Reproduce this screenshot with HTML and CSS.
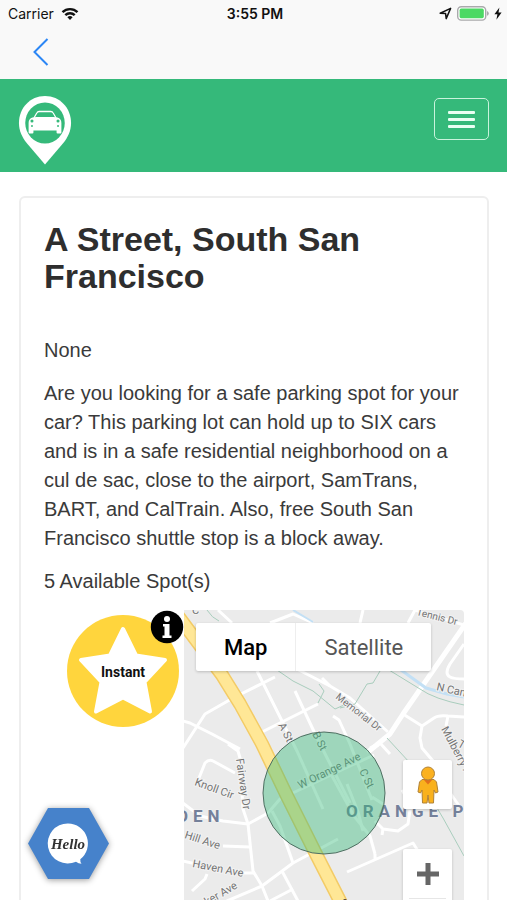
FILE: index.html
```html
<!DOCTYPE html>
<html lang="en">
<head>
    <meta charset="UTF-8">
    <meta name="viewport" content="width=device-width, initial-scale=1.0">
    <title>A Street, South San Francisco</title>
    <link rel="stylesheet" href="styles.css">
</head>
<body>
    <div class="app">
        <header class="top-bar">
            <div class="status-bar">
                <div class="status-left">
                    <span>Carrier</span>
                    <svg width="18" height="14" viewBox="0 0 18 14" fill="none" stroke="#111" stroke-width="2.4">
                        <path d="M1.5 5.2a10.6 10.6 0 0 1 15 0"/>
                        <path d="M4.3 8.2a6.6 6.6 0 0 1 9.4 0"/>
                        <path d="M9 13l-2.6-2.7a3.7 3.7 0 0 1 5.2 0z" fill="#111" stroke="none"/>
                    </svg>
                </div>
                <span class="time">3:55 PM</span>
                <div class="status-right">
                    <svg width="13" height="13" viewBox="0 0 13 13" fill="none" stroke="#111" stroke-width="1.5" stroke-linejoin="round">
                        <path d="M1.2 6.2L11.6 1.4 7.2 11.6 6.6 6.6z"/>
                    </svg>
                    <svg width="32" height="15" viewBox="0 0 32 15">
                        <rect x="0.7" y="0.7" width="28" height="13.4" rx="3.6" fill="#fff" stroke="#a9a9ab" stroke-width="1.4"/>
                        <rect x="2.6" y="2.6" width="24.2" height="9.6" rx="1.6" fill="#4cd964"/>
                        <path d="M30 5v4.8q1.8-.8 1.8-2.4T30 5z" fill="#a9a9ab"/>
                    </svg>
                    <svg width="8" height="13" viewBox="0 0 8 13" fill="#111">
                        <path d="M5.4.4L.4 7.2h3L2.4 12.8 7.6 5.6H4.5z"/>
                    </svg>
                </div>
            </div>
            <button class="back" aria-label="Back">
                <svg width="16" height="28" viewBox="0 0 16 28" fill="none" stroke="#2b86f5" stroke-width="2">
                    <path d="M14.5 1L1.5 14l13 13"/>
                </svg>
            </button>
        </header>

        <nav class="navbar">
            <a href="#" class="brand" aria-label="Home">
                <svg width="54" height="70" viewBox="0 0 56 70" preserveAspectRatio="none">
                    <path d="M28 1C12.5 1 1 13 1 28c0 8 3.5 14.500 8 20l19 21.500L47 48c4.500-5.500 8-12 8-20C55 13 43.500 1 28 1z" fill="#fff"/>
                    <circle cx="28" cy="28" r="20.5" fill="#35b97a"/>
                    <path d="M16.500 23l3-5q.8-1.500 2.500-1.500h12q1.700 0 2.500 1.500l3 5" fill="none" stroke="#fff" stroke-width="1.3"/>
                    <path d="M15 22.500l4-.5h18l4 .5q4 1 4 5.500v9.500q0 1-1 1h-3q-1 0-1-1v-2H16v2q0 1-1 1h-3q-1 0-1-1V28q0-4.500 4-5.500z" fill="#fff"/>
                    <circle cx="14.500" cy="26" r="1.600" fill="#35b97a"/>
                    <circle cx="41.500" cy="26" r="1.600" fill="#35b97a"/>
                    <circle cx="14.500" cy="31" r="1" fill="#35b97a"/>
                    <circle cx="41.500" cy="31" r="1" fill="#35b97a"/>
                </svg>
            </a>
            <button class="toggle" aria-label="Menu">
                <span></span>
                <span></span>
                <span></span>
            </button>
        </nav>

        <main class="card">
            <h1>A Street, South San Francisco</h1>
            <p>None</p>
            <p>Are you looking for a safe parking spot for your car? This parking lot can hold up to SIX cars and is in a safe residential neighborhood on a cul de sac, close to the airport, SamTrans, BART, and CalTrain. Also, free South San Francisco shuttle stop is a block away.</p>
            <p>5 Available Spot(s)</p>

            <div class="location">
                <div class="instant">
                    <svg width="117" height="118" viewBox="0 0 117 118">
                        <circle cx="56" cy="61" r="56" fill="#ffd53d"/>
                        <path d="M56 19l13 26.500 29 4.500-20.500 22 5.500 29.500-27-14-27 14L34.500 72 14 50l29-4.500z" fill="#fff" stroke="#fff" stroke-width="4" stroke-linejoin="round"/>
                        <text x="56" y="67" class="instant-text">Instant</text>
                        <circle cx="100" cy="17" r="16.200" fill="#000"/>
                        <circle cx="100" cy="9" r="3" fill="#fff"/>
                        <path d="M96 14h6.500v11.500h2V28h-9v-2.500h2V16.500H96z" fill="#fff"/>
                    </svg>
                </div>

                <div class="map">
                    <svg class="map-canvas" width="280" height="320" viewBox="0 0 280 320" preserveAspectRatio="xMinYMin slice">
                        <rect width="280" height="320" fill="#ebebeb"/>

                        <!-- streets -->
                        <g class="street">
                            <path d="M-4 110L6 113 28 124 56 139"/>
                            <path d="M-1 138L21 104 49 88 91 67"/>
                            <path d="M73 61L113 141 139 199"/>
                            <path d="M111 81L133 128 166 193"/>
                            <path d="M76 123L134 94"/>
                            <path d="M111 58L146 76 166 88 204 122"/>
                            <path d="M146 76L138 68"/>
                            <path d="M149 106L155 110 166 134 184 180 188 190"/>
                            <path d="M86 13L109 4 129 13"/>
                            <path d="M34 0L48 13"/>
                            <path d="M179 0L176 13"/>
                            <path d="M231 0L224 13M231 0L280 15"/>
                            <path d="M280 34L266 54Q260 64 266 67 270 69 280 69"/>
                            <path d="M219 104L238 116 250 108Q254 105 264 106L280 107"/>
                            <path d="M238 116L236 128 238 138 249 151 264 180 276 197"/>
                            <path d="M264 106L262 116"/>
                            <path d="M186 138L196 133 206 144M194 135L183 142"/>
                            <path d="M148 166L170 206 186 226 191 244"/>
                            <path d="M163 174L174 202 179 221"/>
                            <path d="M188 187L199 194M218 180L224 190"/>
                            <path d="M191 211L199 219 214 221 224 214 226 200M199 219L198 225"/>
                            <path d="M163 262L229 233 234 241M191 244L191 250"/>
                            <path d="M13 173L21 153Q25 149 29 151L51 163"/>
                            <path d="M44 134L54 141 56 148 59 199 64 214 69 261 78 276 84 291 94 320"/>
                            <path d="M-1 193L16 206 39 211 64 214 84 203 96 189 166 156 190 145"/>
                            <path d="M39 236L66 237"/>
                            <path d="M-1 251L12 254M59 263L71 263"/>
                            <path d="M23 264L21 269 8 281"/>
                            <path d="M88 201L96 216 109 253"/>
                            <path d="M20 305L43 291 78 276 109 253 154 229"/>
                            <path d="M98 261L114 291 126 318"/>
                            <path d="M86 291L109 279"/>
                        </g>
                        <path class="avenue" d="M284 10L219 104 206 124 184 142"/>

                        <!-- creek and trails -->
                        <g class="creek">
                            <path d="M109 0L129 12"/>
                            <path d="M217 60L242 78 263 84 280 87" stroke-width="3"/>
                        </g>
                        <g class="trail">
                            <path d="M23 0Q28 8 35 11"/>
                            <path d="M93 60L109 71 129 81 151 99 160 95"/>
                            <path d="M135 74L140 81 134 93"/>
                            <path d="M196 61L189 73 183 74 171 94 156 98"/>
                            <path d="M205 60L236 79Q250 89 280 95"/>
                            <path d="M203 128L226 153 259 208 280 246"/>
                        </g>

                        <!-- main road -->
                        <path class="highway-edge" d="M-6 6L3 18 38 65 56 94 78 134 103 186 133 246 156 291 171 322"/>
                        <path class="highway" d="M-6 6L3 18 38 65 56 94 78 134 103 186 133 246 156 291 171 322"/>

                        <g class="label">
                            <text class="small" transform="translate(232 5) rotate(14)">Tennis Dr</text>
                            <text transform="translate(252 80) rotate(13)">N Canal St</text>
                            <text class="small" transform="translate(151 88) rotate(38)">Memorial Dr</text>
                            <text transform="translate(94 115) rotate(63)">A St</text>
                            <text transform="translate(128 124) rotate(63)">B St</text>
                            <text transform="translate(175 161) rotate(64)">C St</text>
                            <text transform="translate(257 119) rotate(62)">Mulberry Ave</text>
                            <text transform="translate(273 136) rotate(30)">T</text>
                            <text transform="translate(116 179) rotate(-26)">W Orange Ave</text>
                            <text transform="translate(52 149) rotate(82)">Fairway Dr</text>
                            <text transform="translate(10 175) rotate(20)">Knoll Cir</text>
                            <text transform="translate(0 228) rotate(18)">Hill Ave</text>
                            <text transform="translate(8 257) rotate(11)">Haven Ave</text>
                            <text transform="translate(12 302) rotate(-30)">Baker Ave</text>
                            <text x="8" y="4">C</text>
                        </g>
                        <text class="district" x="-7" y="212">DEN</text>
                        <text class="district" x="162" y="207">ORANGE PARK</text>
                        <circle cx="161" cy="291" r="2" fill="#55433a"/>

                        <circle cx="140" cy="183" r="61" fill="#35b97a" fill-opacity="0.42" stroke="#4f6f62" stroke-width="1"/>
                    </svg>

                    <div class="map-type">
                        <button class="active">Map</button>
                        <button>Satellite</button>
                    </div>

                    <div class="map-tools">
                        <button class="pegman" aria-label="Street View">
                            <svg width="24" height="38" viewBox="0 0 24 38" stroke="#b08238" stroke-width="1">
                                <path d="M6 13.500h12l2.500 2.500 1.500 10-2.500 1-1.500-3-.5 13h-4.500L12 29l-1 8H6.500L6 24l-1.500 3L2 26l1.500-10z" fill="#f9b11d"/>
                                <path d="M7.500 13.500L12 18.500l4.500-5z" fill="#e2701b" stroke="none"/>
                                <circle cx="12" cy="7.500" r="6.500" fill="#fbb120"/>
                            </svg>
                        </button>
                        <div class="zoom">
                            <button aria-label="Zoom in">
                                <svg width="22" height="22" viewBox="0 0 22 22" fill="#666">
                                    <path d="M8.500 0h5v8.500H22v5h-8.500V22h-5v-8.500H0v-5h8.500z"/>
                                </svg>
                            </button>
                            <button aria-label="Zoom out">
                                <svg width="22" height="22" viewBox="0 0 22 22" fill="#666">
                                    <path d="M0 8.500h22v5H0z"/>
                                </svg>
                            </button>
                        </div>
                    </div>
                </div>
            </div>
        </main>

        <button class="hello" aria-label="Hello">
            <svg width="83" height="73" viewBox="0 0 83 73">
                <path d="M21 1h41l20 35.500L62 72H21L1 36.500z" fill="#4682cb"/>
                <path d="M41 16.500a20 20 0 1 0 8 38.200q2.500 2 5.500 2-1.500-2-1.200-4.500A20 20 0 0 0 41 16.500z" fill="#fff"/>
                <text x="41" y="42" class="hello-text">Hello</text>
            </svg>
        </button>
    </div>
</body>
</html>
```

FILE: styles.css
```css
* {
    margin: 0;
    padding: 0;
    box-sizing: border-box;
}

body {
    background-color: #fff;
    color: #3a3a3a;
    font-family: "Liberation Sans", Helvetica, Arial, sans-serif;
    font-size: 20px;
    line-height: 29px;
}

button {
    border: none;
    background: none;
    font: inherit;
    cursor: pointer;
}

svg {
    display: block;
}

.app {
    height: 100vh;
    overflow: hidden;
}

/* Phone status bar and back button */
.top-bar {
    background-color: #f9f9f9;
    height: 79px;
}

.status-bar {
    display: grid;
    grid-template-columns: 1fr auto 1fr;
    align-items: center;
    height: 27px;
    padding: 0 5px 0 8px;
    color: #111;
    font-family: Inter, sans-serif;
    font-size: 14px;
    line-height: 20px;
}

.status-left,
.status-right {
    display: flex;
    align-items: center;
    gap: 7px;
}

.status-right {
    justify-content: flex-end;
    gap: 5px;
}

.time {
    font-weight: 600;
}

.back {
    display: block;
    padding: 11px 33px;
}

.navbar {
    display: flex;
    justify-content: space-between;
    align-items: flex-start;
    height: 93px;
    padding: 16px 18px;
    background-color: #35b97a;
}

.toggle {
    display: flex;
    flex-direction: column;
    justify-content: center;
    align-items: center;
    gap: 4px;
    width: 55px;
    height: 42px;
    margin-top: 3px;
    border: 1px solid #c8f3dc;
    border-radius: 5px;
}

.toggle span {
    width: 27px;
    height: 3px;
    border-radius: 1px;
    background-color: #e9fff3;
}

.card {
    margin: 24px 18px 24px 19px;
    padding: 23px;
    border: 2px solid #eee;
    border-radius: 6px;
}

.card h1 {
    margin-bottom: 41px;
    color: #2e2e2e;
    font-size: 34px;
    line-height: 37px;
}

.card p {
    margin-bottom: 14px;
}

.location {
    display: grid;
    grid-template-columns: 1fr 2fr;
}

.instant {
    display: flex;
    justify-content: flex-end;
    align-items: flex-start;
}

.instant-text {
    fill: #111;
    font-family: "Liberation Sans Narrow", Roboto, sans-serif;
    font-size: 14px;
    font-weight: 700;
    text-anchor: middle;
}

/* Map */
.map {
    position: relative;
    overflow: hidden;
    border-radius: 0 4px 0 0;
    font-family: Roboto, sans-serif;
}

.map-canvas {
    width: 100%;
}

.street,
.avenue,
.creek,
.trail,
.highway,
.highway-edge {
    fill: none;
    stroke-linejoin: round;
}

.street {
    stroke: #fff;
    stroke-width: 3;
}

.avenue {
    stroke: #fff;
    stroke-width: 5;
}

.creek {
    stroke: #c3e0f5;
    stroke-width: 2;
}

.trail {
    stroke: #a9cdbd;
    stroke-width: 1;
}

.highway-edge {
    stroke: #f3cb66;
    stroke-width: 14;
}

.highway {
    stroke: #ffe796;
    stroke-width: 11;
}

.label {
    fill: #757575;
    stroke: #f3f3f3;
    stroke-width: 2;
    paint-order: stroke;
    font-size: 11px;
}

.label .small {
    font-size: 10px;
}

.district {
    fill: #74809a;
    stroke: #f3f3f3;
    stroke-width: 1;
    paint-order: stroke;
    font-size: 17px;
    font-weight: 700;
    letter-spacing: 5px;
}

.map-type {
    position: absolute;
    top: 13px;
    left: 12px;
    display: flex;
    background-color: #fff;
    border-radius: 2px;
    box-shadow: 0 1px 3px rgba(0, 0, 0, 0.2);
}

.map-type button {
    height: 48px;
    padding: 0 28px;
    color: #565656;
    font-size: 22px;
}

.map-type .active {
    border-right: 1px solid #eee;
    color: #000;
    font-weight: 500;
}

.map-tools {
    position: absolute;
    top: 150px;
    right: 12px;
    display: flex;
    flex-direction: column;
    gap: 40px;
}

.pegman,
.zoom {
    width: 49px;
    background-color: #fff;
    border-radius: 2px;
    box-shadow: 0 1px 3px rgba(0, 0, 0, 0.2);
}

.pegman,
.zoom button {
    display: flex;
    justify-content: center;
    align-items: center;
    height: 49px;
}

.zoom button {
    width: 37px;
    margin: 0 auto;
}

.zoom button + button {
    border-top: 1px solid #e6e6e6;
}

/* Chat launcher */
.hello {
    position: fixed;
    left: 27px;
    bottom: 20px;
    filter: drop-shadow(0 1px 3px rgba(0, 0, 0, 0.4));
}

.hello-text {
    fill: #333;
    font-family: "Brush Script MT", "Liberation Serif", serif;
    font-size: 15px;
    font-style: italic;
    font-weight: 700;
    text-anchor: middle;
}
```
